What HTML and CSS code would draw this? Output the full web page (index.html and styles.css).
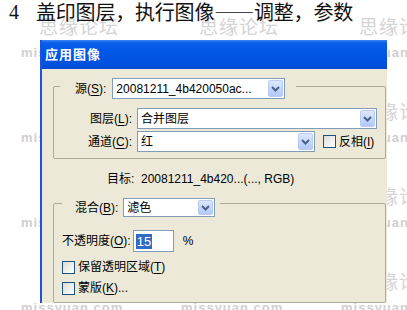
FILE: index.html
```html
<!DOCTYPE html>
<html lang="zh-CN">
<head>
    <meta charset="UTF-8">
    <title>应用图像</title>
    <link rel="stylesheet" href="styles.css">
</head>
<body>
    <div class="page">
        <!-- watermark layer behind the dialog, only the parts that show -->
        <div class="watermarks">
            <div class="wm"><span class="wm-cn">思缘论坛</span><span class="wm-en">missyuan.com</span></div>
            <div class="wm"><span class="wm-cn">思缘论坛</span></div>
            <div class="wm"><span class="wm-cn">思缘论坛</span><span class="wm-en">missyuan.com</span></div>
            <div class="wm"><span class="wm-cn hide">思缘论坛</span><span class="wm-en">missyuan.com</span></div>
            <div class="wm"></div>
            <div class="wm"><span class="wm-cn">思缘论坛</span><span class="wm-en">missyuan.com</span></div>
            <div class="wm"><span class="wm-cn hide">思缘论坛</span><span class="wm-en">missyuan.com</span></div>
            <div class="wm"></div>
            <div class="wm"><span class="wm-cn">思缘论坛</span><span class="wm-en">missyuan.com</span></div>
            <div class="wm"><span class="wm-cn hide">思缘论坛</span><span class="wm-en">missyuan.com</span></div>
            <div class="wm"><span class="wm-cn hide">思缘论坛</span><span class="wm-en">missyuan.com</span></div>
            <div class="wm"><span class="wm-cn">思缘论坛</span><span class="wm-en">missyuan.com</span></div>
        </div>

        <p class="step"><span class="step-num">4</span><span class="step-text">盖印图层，执行图像——调整，参数</span></p>

        <div class="dialog">
            <div class="titlebar">应用图像</div>
            <div class="dialog-body">

                <div class="group group-source">
                    <div class="group-head head-source">
                        <span class="lbl">源(<u>S</u>):</span>
                        <div class="combo combo-source">
                            <span class="combo-text">20081211_4b420050ac...</span>
                            <span class="combo-btn"><svg width="9" height="6" viewBox="0 0 9 6"><polyline points="1,1 4.5,4.5 8,1" fill="none" stroke="#4d6185" stroke-width="2"/></svg></span>
                        </div>
                    </div>
                    <div class="rows">
                        <span class="lbl lbl-right">图层(<u>L</u>):</span>
                        <div class="row-ctrl">
                            <div class="combo combo-layer">
                                <span class="combo-text">合并图层</span>
                                <span class="combo-btn"><svg width="9" height="6" viewBox="0 0 9 6"><polyline points="1,1 4.5,4.5 8,1" fill="none" stroke="#4d6185" stroke-width="2"/></svg></span>
                            </div>
                        </div>
                        <span class="lbl lbl-right">通道(<u>C</u>):</span>
                        <div class="row-ctrl">
                            <div class="combo combo-channel">
                                <span class="combo-text">红</span>
                                <span class="combo-btn"><svg width="9" height="6" viewBox="0 0 9 6"><polyline points="1,1 4.5,4.5 8,1" fill="none" stroke="#4d6185" stroke-width="2"/></svg></span>
                            </div>
                            <span class="check"></span>
                            <span class="lbl">反相(<u>I</u>)</span>
                        </div>
                    </div>
                </div>

                <div class="target">目标:&nbsp; 20081211_4b420...(..., RGB)</div>

                <div class="group group-blend">
                    <div class="group-head head-blend">
                        <span class="lbl">混合(<u>B</u>):</span>
                        <div class="combo combo-blend">
                            <span class="combo-text">滤色</span>
                            <span class="combo-btn"><svg width="9" height="6" viewBox="0 0 9 6"><polyline points="1,1 4.5,4.5 8,1" fill="none" stroke="#4d6185" stroke-width="2"/></svg></span>
                        </div>
                    </div>
                    <div class="opacity-row">
                        <span class="lbl">不透明度(<u>O</u>):</span>
                        <div class="field"><span class="sel">15</span></div>
                        <span class="lbl pct">%</span>
                    </div>
                    <div class="check-row first">
                        <span class="check"></span>
                        <span class="lbl">保留透明区域(<u>T</u>)</span>
                    </div>
                    <div class="check-row">
                        <span class="check"></span>
                        <span class="lbl">蒙版(<u>K</u>)...</span>
                    </div>
                </div>

            </div>
        </div>
    </div>
</body>
</html>
```

FILE: styles.css
```css
body {
    margin: 0;
    background: #fff;
    font-family: "Liberation Sans", "Noto Sans CJK SC", sans-serif;
}
.page {
    position: relative;
    width: 407px;
    height: 310px;
    overflow: hidden;
}

/* watermark */
.watermarks {
    position: absolute;
    top: 18px;
    left: 39px;
    display: grid;
    grid-template-columns: repeat(3, 160px);
    grid-auto-rows: 85px;
}
.wm {
    display: flex;
    flex-direction: column;
}
.wm-cn {
    font-size: 19px;
    line-height: 20px;
    color: #d4d4d4;
    letter-spacing: 1px;
    white-space: nowrap;
}
.wm-en {
    margin: 9px 0 0 -18px;
    font-size: 13px;
    font-weight: bold;
    line-height: 12px;
    color: #d0d0d0;
    letter-spacing: 1px;
}
.hide {
    visibility: hidden;
}

/* heading */
.step {
    position: relative;
    margin: 0;
    height: 40px;
    padding-left: 9px;
    display: flex;
    gap: 17px;
    font-size: 20px;
    line-height: 24px;
    color: #111;
}
.step-num {
    font-family: "Liberation Serif", serif;
}
.step-text {
    font-family: "Noto Sans CJK SC", serif;
    font-weight: 400;
    letter-spacing: -0.2px;
}

/* dialog */
.dialog {
    position: relative;
    margin-left: 40px;
    width: 345px;
    height: 263px;
    border-left: 2px solid #1f52dc;
    background: #ece9d8;
    overflow: hidden;
    font-size: 12px;
    color: #000;
}
.titlebar {
    height: 29px;
    padding-left: 3px;
    line-height: 29px;
    font-size: 13px;
    font-weight: bold;
    letter-spacing: 1px;
    color: #fff;
    background: linear-gradient(#3d86f5 0, #0a5ee9 3px, #0056e6 45%, #0050de 85%, #0a49cc 100%);
}
.dialog-body {
    display: flex;
    flex-direction: column;
}

.lbl {
    line-height: 16px;
    white-space: nowrap;
}
.lbl u {
    text-decoration-thickness: 1px;
    text-underline-offset: 2px;
}

/* group boxes */
.group {
    border: 1px solid #aeab98;
    border-radius: 2px;
    margin-left: 11px;
    margin-right: 1px;
}
.group-head {
    display: flex;
    align-items: center;
    width: max-content;
    background: #ece9d8;
}
.group-source {
    margin-top: 17px;
    padding-bottom: 6px;
}
.head-source {
    margin: -9px 0 0 6px;
    padding: 0 11px 0 15px;
    gap: 6px;
}
.group-blend {
    margin-top: 16px;
    padding-bottom: 6px;
}
.head-blend {
    margin: -6px 0 0 8px;
    padding: 0 5px 0 13px;
    gap: 5px;
}

/* combo boxes */
.combo {
    display: flex;
    align-items: center;
    justify-content: space-between;
    box-sizing: border-box;
    height: 21px;
    padding: 1px;
    border: 1px solid #7f9db9;
    background: #fff;
}
.combo-text {
    padding-left: 2px;
    line-height: 16px;
}
.combo-btn {
    display: flex;
    align-items: center;
    justify-content: center;
    box-sizing: border-box;
    width: 15px;
    height: 100%;
    border: 1px solid #b9cbf3;
    border-radius: 2px;
    background: linear-gradient(#dce8fe, #c2d5fc 60%, #b2c8f8);
}
.combo-source { width: 173px; }
.combo-layer { width: 240px; }
.combo-channel { width: 178px; }
.combo-blend { width: 92px; height: 19px; }

.rows {
    display: grid;
    grid-template-columns: 78px auto;
    column-gap: 5px;
    row-gap: 2px;
    margin-top: 9px;
    align-items: center;
}
.lbl-right {
    text-align: right;
}
.row-ctrl {
    display: flex;
    align-items: center;
}
.row-ctrl .check {
    margin: 0 3px 0 8px;
}

.check {
    display: inline-block;
    box-sizing: border-box;
    width: 13px;
    height: 13px;
    border: 1px solid #1c5180;
    background: linear-gradient(135deg, #dcdcd7, #fff);
}

.target {
    margin: 12px 0 0 65px;
    line-height: 16px;
}

/* blend group content */
.opacity-row {
    display: flex;
    align-items: center;
    margin: 13px 0 0 8px;
}
.field {
    box-sizing: border-box;
    width: 41px;
    height: 22px;
    margin-left: 2px;
    padding: 3px 0 0 2px;
    border: 1px solid #7f9db9;
    background: #fff;
}
.sel {
    display: inline-block;
    padding: 0 1px;
    line-height: 15px;
    font-size: 13px;
    color: #fff;
    background: #316ac5;
}
.pct {
    margin-left: 9px;
}
.check-row {
    display: flex;
    align-items: center;
    gap: 3px;
    margin: 5px 0 0 8px;
}
.check-row.first {
    margin-top: 7px;
}
```
